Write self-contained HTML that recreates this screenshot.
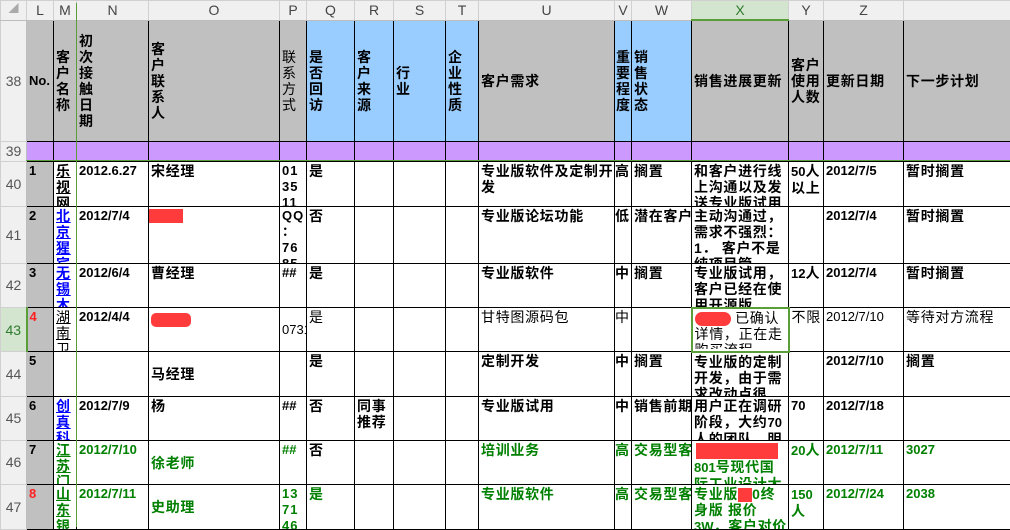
<!DOCTYPE html>
<html><head><meta charset="utf-8"><style>
body{margin:0;background:#fff;width:1010px;height:527px;overflow:hidden;position:relative;font-family:"Liberation Sans","Noto Sans CJK SC","WenQuanYi Zen Hei",sans-serif;}
table{border-collapse:collapse;table-layout:fixed;position:absolute;left:0;top:0;width:1010px;}
td{border:1px solid #000;padding:0;vertical-align:top;font-size:14px;letter-spacing:0.7px;line-height:16px;font-weight:bold;color:#000;overflow:hidden;}
td div{overflow:hidden;padding:1px 0 0 2px;box-sizing:border-box;}
.d{font-size:13px;letter-spacing:0}
tr.ch td{background:#f0f0f0;border:1px solid #d0d0d0;border-bottom:1px solid #bdbdbd;font-weight:normal;color:#444;text-align:center;font-size:14px;letter-spacing:0;height:18px;vertical-align:middle;line-height:18px}
td.rh{background:#f0f0f0;border:1px solid #d0d0d0;border-right:1px solid #bdbdbd;color:#555;font-weight:normal;text-align:center;vertical-align:middle;font-size:14px;letter-spacing:0}
tr.h td{background:#c0c0c0;vertical-align:middle}
tr.h td.b{background:#99ccff}
tr.h td.rh{background:#f0f0f0}
tr.p td{background:#cc99ff}
tr.p td.rh{background:#f0f0f0}
td.g{background:#c0c0c0}
.n{font-weight:normal}
.gr{color:#008000}
.bl{color:#0000ff;text-decoration:underline}
.u{text-decoration:underline}
.red{color:#ff2020}
.m{vertical-align:middle}
.v{width:17px}
.rb{display:inline-block;background:#ff3b3b;height:14px;vertical-align:middle}
.h44{height:43px}.h45{height:44px}.h57{height:56px}
</style></head><body>
<table>
<colgroup><col style="width:26px"><col style="width:27px"><col style="width:23px"><col style="width:72px"><col style="width:131px"><col style="width:27px"><col style="width:48px"><col style="width:39px"><col style="width:52px"><col style="width:33px"><col style="width:136px"><col style="width:17px"><col style="width:60px"><col style="width:97px"><col style="width:35px"><col style="width:80px"><col style="width:107px"></colgroup>
<tr class="ch"><td style="color:#aaa;font-size:10px">◢</td><td>L</td><td>M</td><td>N</td><td>O</td><td>P</td><td>Q</td><td>R</td><td>S</td><td>T</td><td>U</td><td>V</td><td>W</td><td style="background:#d3e5cf;color:#2f7a2f;border-bottom:2px solid #5a9e3a">X</td><td>Y</td><td>Z</td><td></td></tr>
<tr class="h" style="height:121px"><td class="rh">38</td><td><div style="font-size:13px;letter-spacing:0">No.</div></td><td><div class="v">客户名称</div></td><td><div class="v">初次接触日期</div></td><td><div class="v">客户联系人</div></td><td><div class="n v">联系方式</div></td><td class="b"><div class="v">是否回访</div></td><td class="b"><div class="v">客户来源</div></td><td class="b"><div class="v">行业</div></td><td class="b"><div class="v">企业性质</div></td><td><div>客户需求</div></td><td class="b"><div style="padding:0 1px">重要程度</div></td><td class="b"><div class="v">销售状态</div></td><td><div>销售进展更新</div></td><td><div style="width:32px">客户使用人数</div></td><td><div>更新日期</div></td><td><div>下一步计划</div></td></tr>
<tr class="p" style="height:20px"><td class="rh">39</td><td></td><td></td><td></td><td></td><td></td><td></td><td></td><td></td><td></td><td></td><td></td><td></td><td></td><td></td><td></td><td></td></tr>
<tr style="height:45px"><td class="rh">40</td><td class="g"><div class="d">1</div></td><td><div class="u h45">乐视网</div></td><td><div class="d">2012.6.27</div></td><td><div>宋经理</div></td><td><div class="d h45" style="letter-spacing:1px">01 35 11</div></td><td><div>是</div></td><td></td><td></td><td></td><td><div>专业版软件及定制开发</div></td><td><div style="padding:1px 0">高</div></td><td><div>搁置</div></td><td><div class="h45">和客户进行线上沟通以及发送专业版试用</div></td><td><div><span class="d">50</span>人以上</div></td><td><div class="d">2012/7/5</div></td><td><div>暂时搁置</div></td></tr>
<tr style="height:57px"><td class="rh">41</td><td class="g"><div class="d">2</div></td><td><div class="bl h57">北京猩宾</div></td><td><div class="d">2012/7/4</div></td><td><div style="padding:0"><span class="rb" style="width:34px"></span></div></td><td><div class="d h57" style="letter-spacing:1px">QQ ： 76 85</div></td><td><div>否</div></td><td></td><td></td><td></td><td><div>专业版论坛功能</div></td><td><div style="padding:1px 0">低</div></td><td><div style="white-space:nowrap">潜在客户</div></td><td><div class="h57">主动沟通过，需求不强烈：1．&nbsp;客户不是纯项目管</div></td><td></td><td><div class="d">2012/7/4</div></td><td><div>暂时搁置</div></td></tr>
<tr style="height:44px"><td class="rh">42</td><td class="g"><div class="d">3</div></td><td><div class="bl h44">无锡木</div></td><td><div class="d">2012/6/4</div></td><td><div>曹经理</div></td><td><div class="d">##</div></td><td><div>是</div></td><td></td><td></td><td></td><td><div>专业版软件</div></td><td><div style="padding:1px 0">中</div></td><td><div>搁置</div></td><td><div class="h44">专业版试用，客户已经在使用开源版</div></td><td><div style="white-space:nowrap"><span class="d">12</span>人</div></td><td><div class="d">2012/7/4</div></td><td><div>暂时搁置</div></td></tr>
<tr style="height:44px"><td class="rh" style="background:#d3e5cf;color:#2f7a2f;border-right:2px solid #5a9e3a">43</td><td class="g"><div class="d red">4</div></td><td><div class="n u h44">湖南卫</div></td><td><div class="d">2012/4/4</div></td><td><div style="padding-top:3px"><span class="rb" style="width:40px;border-radius:5px"></span></div></td><td class="m"><div class="n d" style="white-space:nowrap">0731</div></td><td><div class="n">是</div></td><td></td><td></td><td></td><td><div class="n">甘特图源码包</div></td><td><div class="n" style="padding:1px 0">中</div></td><td></td><td style="border:2px solid #5a9e3a"><div class="n" style="height:40px"><span class="rb" style="width:36px;border-radius:7px"></span> 已确认详情，正在走购买流程</div></td><td><div class="n">不限</div></td><td><div class="n d">2012/7/10</div></td><td><div class="n">等待对方流程</div></td></tr>
<tr style="height:44px"><td class="rh">44</td><td class="g"><div class="d">5</div></td><td></td><td></td><td class="m"><div>马经理</div></td><td></td><td><div>是</div></td><td></td><td></td><td></td><td><div>定制开发</div></td><td><div style="padding:1px 0">中</div></td><td><div>搁置</div></td><td><div class="h44">专业版的定制开发，由于需求改动点很</div></td><td></td><td><div class="d">2012/7/10</div></td><td><div>搁置</div></td></tr>
<tr style="height:44px"><td class="rh">45</td><td class="g"><div class="d">6</div></td><td><div class="bl h44">创真科</div></td><td><div class="d">2012/7/9</div></td><td><div>杨</div></td><td><div class="d">##</div></td><td><div>否</div></td><td><div>同事推荐</div></td><td></td><td></td><td><div>专业版试用</div></td><td><div style="padding:1px 0">中</div></td><td><div style="white-space:nowrap">销售前期</div></td><td><div class="h44">用户正在调研阶段，大约<span class="d">70</span>人的团队，明</div></td><td><div class="d">70</div></td><td><div class="d">2012/7/18</div></td><td></td></tr>
<tr style="height:44px"><td class="rh">46</td><td class="g"><div class="d">7</div></td><td><div class="gr u h44">江苏门</div></td><td><div class="gr d">2012/7/10</div></td><td class="m"><div class="gr">徐老师</div></td><td><div class="gr d">##</div></td><td><div>否</div></td><td></td><td></td><td></td><td><div class="gr">培训业务</div></td><td><div class="gr" style="padding:1px 0">高</div></td><td><div class="gr" style="white-space:nowrap">交易型客户</div></td><td><div class="gr h44"><span class="rb" style="width:82px;height:16px;margin-left:2px"></span><br><span class="d">801</span>号现代国际工业设计大</div></td><td><div class="gr" style="white-space:nowrap"><span class="d">20</span>人</div></td><td><div class="gr d">2012/7/11</div></td><td><div class="gr d">3027</div></td></tr>
<tr style="height:45px"><td class="rh">47</td><td class="g"><div class="d red">8</div></td><td><div class="gr u h45">山东银</div></td><td><div class="gr d">2012/7/11</div></td><td class="m"><div class="gr">史助理</div></td><td><div class="gr d h45" style="letter-spacing:1px">13 71 46</div></td><td><div class="gr">是</div></td><td></td><td></td><td></td><td><div class="gr">专业版软件</div></td><td><div class="gr" style="padding:1px 0">高</div></td><td><div class="gr" style="white-space:nowrap">交易型客户</div></td><td><div class="gr h45">专业版<span class="rb" style="width:14px"></span>0终身版&nbsp;报价<span class="d">3W</span>，客户对价</div></td><td><div class="gr"><span class="d">150</span>人</div></td><td><div class="gr d">2012/7/24</div></td><td><div class="gr d">2038</div></td></tr>
</table>
<div style="position:absolute;left:76px;top:3px;width:1px;height:524px;background:#5a9e3a"></div>
<div style="position:absolute;left:26px;top:160px;width:984px;height:1px;background:#5a9e3a"></div>
</body></html>
